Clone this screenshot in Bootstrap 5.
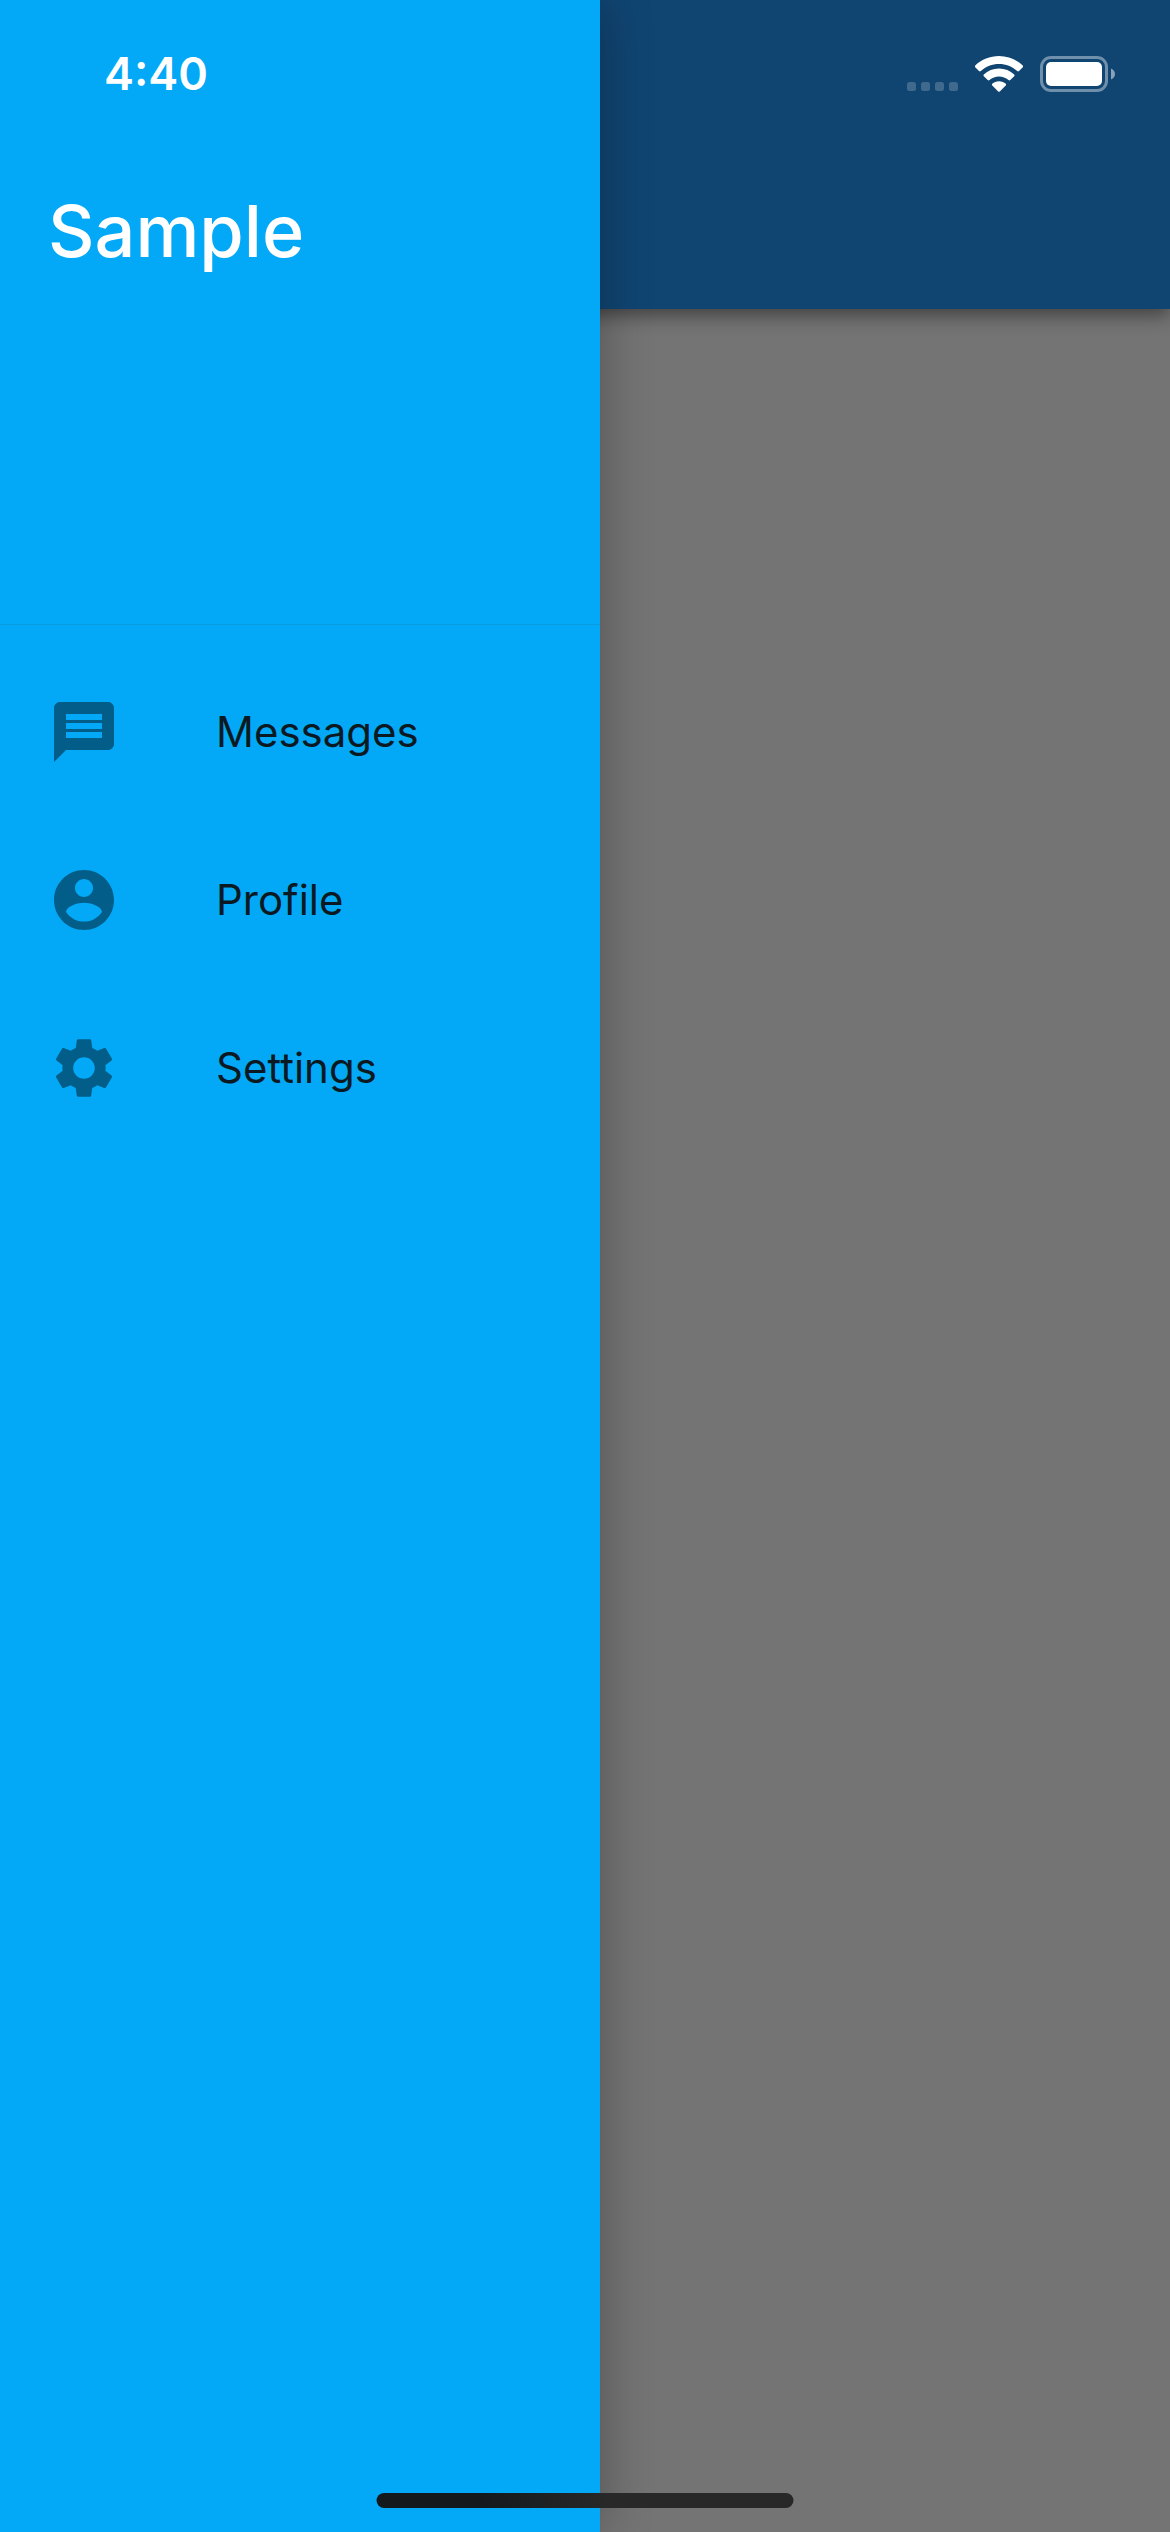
<!DOCTYPE html>
<html lang="en">
<head>
<meta charset="utf-8">
<meta name="viewport" content="width=device-width, initial-scale=1">
<title>Sample</title>
<link href="https://cdn.jsdelivr.net/npm/bootstrap@5.3.0/dist/css/bootstrap.min.css" rel="stylesheet">
<style>
  body { font-family: Inter, "Liberation Sans", sans-serif; background: #747474; }
  .status-bar { height: 140px; padding: 8px 54px 0 104px; z-index: 30; }
  .clock { font-size: 45px; line-height: 48px; font-weight: 600; }
  .status-icons { gap: 17px; }
  .app-header { height: 309px; background: #104572; box-shadow: 0 6px 18px rgba(0, 0, 0, .45); }
  .drawer { width: 600px; max-width: 80%; background: #03a9f6; box-shadow: 0 0 48px rgba(0, 0, 0, .3); z-index: 20; }
  .drawer-head { height: 624px; padding: 187px 48px 0; }
  .drawer-menu { padding: 23px 0; border-top: 1px solid #0a9be0; }
  .drawer-title { font-size: 72px; line-height: 88px; font-weight: 500; }
  .drawer-link { height: 168px; padding: 0 48px; gap: 96px; font-size: 42px; line-height: 48px; color: #0b1a22; }
  .drawer-link svg { width: 72px; height: 72px; fill: #025d88; }
  .home-bar { width: 417px; height: 15px; bottom: 24px; z-index: 30; background: linear-gradient(90deg, #14191d 25%, #282828 55%); }
</style>
<script src="https://cdn.jsdelivr.net/npm/bootstrap@5.3.0/dist/js/bootstrap.bundle.min.js"></script>
</head>
<body>
<div class="position-relative min-vh-100 overflow-hidden">
  <div class="status-bar position-absolute top-0 start-0 w-100 d-flex align-items-center justify-content-between text-white">
    <span class="clock">4:40</span>
    <div class="status-icons d-flex align-items-end">
      <svg width="51" height="36" viewBox="0 0 51 36" fill="#fff" fill-opacity=".2" aria-hidden="true">
        <rect x="0" y="26" width="9" height="9" rx="2.5"/><rect x="14" y="26" width="9" height="9" rx="2.5"/><rect x="28" y="26" width="9" height="9" rx="2.5"/><rect x="42" y="26" width="9" height="9" rx="2.5"/>
      </svg>
      <svg width="48" height="36" viewBox="0 0 48 36" fill="#fff" aria-hidden="true">
        <path d="M24 0C33 0 41.500 3.500 47.800 9.400Q48.600 10.300 47.800 11.200L44 15.100Q43.100 15.900 42.200 15.100C37.200 10.400 30.900 8 24 8S10.800 10.400 5.800 15.100Q4.900 15.900 4 15.100L.2 11.200Q-.6 10.300.2 9.400C6.500 3.500 15 0 24 0Z"/>
        <path d="M24 12.500C29.900 12.500 35.200 14.700 39.200 18.400Q40 19.300 39.200 20.200L35.300 24.100Q34.400 24.900 33.500 24.100C30.800 21.700 27.600 20.400 24 20.400S17.200 21.700 14.500 24.100Q13.600 24.900 12.700 24.100L8.800 20.200Q8 19.300 8.800 18.400C12.800 14.700 18.100 12.500 24 12.500Z"/>
        <path d="M24 25.200C26.700 25.200 29 26.200 30.800 27.800Q31.400 28.600 30.700 29.400L24.800 35.400Q24 36.100 23.200 35.400L17.300 29.400Q16.600 28.600 17.200 27.800C19 26.200 21.300 25.200 24 25.200Z"/>
      </svg>
      <svg width="76" height="36" viewBox="0 0 76 36" fill="#fff" aria-hidden="true">
        <rect x="1.500" y="1.500" width="65" height="33" rx="9.500" fill="none" stroke="#fff" stroke-opacity=".4" stroke-width="3"/>
        <rect x="6" y="6" width="56" height="24" rx="5"/>
        <path d="M71 12.500c2.500 1 4 3 4 5.500s-1.500 4.500-4 5.500z" fill-opacity=".5"/>
      </svg>
    </div>
  </div>

  <header class="app-header"></header>

  <aside class="drawer position-absolute top-0 start-0 h-100">
    <div class="drawer-head">
      <h1 class="drawer-title text-white m-0">Sample</h1>
    </div>
    <nav class="drawer-menu d-flex flex-column" aria-label="Main">
      <a class="drawer-link d-flex align-items-center text-decoration-none" href="#messages">
        <svg viewBox="0 0 24 24" aria-hidden="true"><path d="M20 2H4c-1.100 0-1.990.9-1.990 2L2 22l4-4h14c1.100 0 2-.9 2-2V4c0-1.100-.9-2-2-2zm-2 12H6v-2h12v2zm0-3H6V9h12v2zm0-3H6V6h12v2z"/></svg>
        <span>Messages</span>
      </a>
      <a class="drawer-link d-flex align-items-center text-decoration-none" href="#profile">
        <svg viewBox="0 0 24 24" aria-hidden="true"><path d="M12 2C6.480 2 2 6.480 2 12s4.480 10 10 10 10-4.480 10-10S17.520 2 12 2zm0 3c1.660 0 3 1.340 3 3s-1.340 3-3 3-3-1.340-3-3 1.340-3 3-3zm0 14.200c-2.500 0-4.710-1.280-6-3.220.03-1.990 4-3.080 6-3.080 1.990 0 5.970 1.090 6 3.080-1.290 1.940-3.500 3.220-6 3.220z"/></svg>
        <span>Profile</span>
      </a>
      <a class="drawer-link d-flex align-items-center text-decoration-none" href="#settings">
        <svg viewBox="0 0 24 24" aria-hidden="true"><path d="M19.140 12.940c.04-.3.06-.61.06-.94 0-.32-.02-.64-.07-.94l2.030-1.580c.18-.14.23-.41.12-.61l-1.920-3.320c-.12-.22-.37-.29-.59-.22l-2.390.96c-.5-.38-1.030-.7-1.620-.94l-.36-2.540c-.04-.24-.24-.41-.48-.41h-3.840c-.24 0-.43.17-.47.41l-.36 2.540c-.59.24-1.130.57-1.620.94l-2.390-.96c-.22-.08-.47 0-.59.22L2.740 8.870c-.12.21-.08.47.12.61l2.030 1.580c-.05.3-.09.63-.09.94s.02.64.07.94l-2.030 1.580c-.18.14-.23.41-.12.61l1.920 3.320c.12.22.37.29.59.22l2.390-.96c.5.38 1.030.7 1.620.94l.36 2.540c.05.24.24.41.48.41h3.840c.24 0 .44-.17.47-.41l.36-2.540c.59-.24 1.130-.56 1.620-.94l2.390.96c.22.08.47 0 .59-.22l1.920-3.320c.12-.22.07-.47-.12-.61l-2.010-1.580zM12 15.600c-1.980 0-3.600-1.620-3.600-3.600s1.620-3.600 3.600-3.600 3.600 1.620 3.600 3.600-1.620 3.600-3.600 3.600z"/></svg>
        <span>Settings</span>
      </a>
    </nav>
  </aside>

  <div class="home-bar position-absolute start-50 translate-middle-x rounded-pill"></div>
</div>
</body>
</html>
